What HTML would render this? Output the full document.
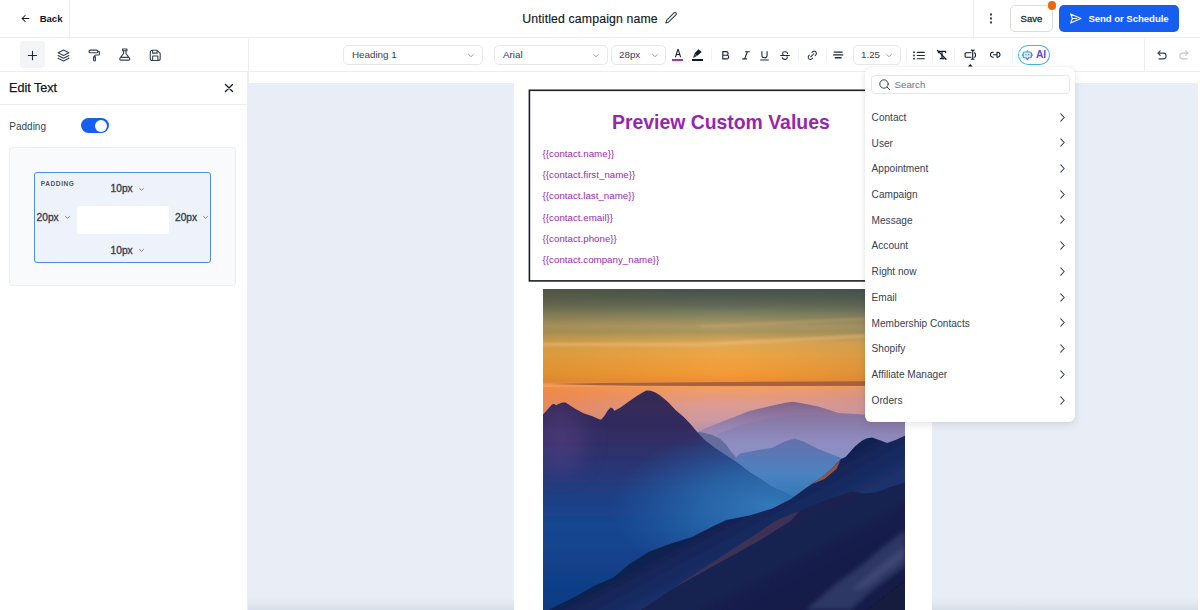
<!DOCTYPE html>
<html lang="en">
<head>
<meta charset="utf-8">
<title>Email Builder</title>
<style>
*{box-sizing:border-box;margin:0;padding:0}
html,body{width:1200px;height:610px;overflow:hidden;background:#fff;font-family:"Liberation Sans",sans-serif;color:#1f2937}
.abs{position:absolute}
#app{position:relative;width:1200px;height:610px;overflow:hidden;background:#fff}
/* top bar */
#topbar{left:0;top:0;width:1200px;height:38px;border-bottom:1px solid #eef0f3;background:#fff}
.vdiv{position:absolute;width:1px;background:#eceef2}
.t{position:absolute;white-space:nowrap;line-height:1}
/* toolbar */
#toolbar{left:0;top:38px;width:1200px;height:34px;border-bottom:1px solid #eceef2;background:#fff}
.sel{position:absolute;top:45px;height:20px;border:1px solid #e6e8ec;border-radius:5px;background:#fff}
.sel .t{top:4px;font-size:9.800px;color:#374151}
.ico{position:absolute;overflow:visible}
/* left panel */
#left{left:0;top:72px;width:248px;height:538px;background:#fff;border-right:1px solid #eceef2}
/* canvas */
#canvas{left:248px;top:83px;width:950px;height:527px;background:#e9eef6}
#email{left:514px;top:83px;width:418px;height:527px;background:#fff}
#tblock{left:528.800px;top:89.500px;width:388.400px;height:191.500px;border:1.600px solid #15171c;background:#fff}
.cv{position:absolute;left:542.600px;font-size:9.750px;color:#9c2ab0;white-space:nowrap;line-height:1}
/* dropdown */
#dd{left:864.800px;top:67.200px;width:210.600px;height:354.500px;background:#fff;border-radius:6px;box-shadow:0 3px 9px rgba(16,24,40,.10),0 0 1px rgba(16,24,40,.18)}
.it{position:absolute;left:871.600px;font-size:10.100px;color:#374151;white-space:nowrap;line-height:1}
.px{font-size:10.200px;font-weight:normal;color:#374151;-webkit-text-stroke:.35px #374151}
</style>
</head>
<body>
<div id="app">

<!-- CANVAS -->
<div id="canvas" class="abs"></div>
<div class="abs" style="left:248px;top:596px;width:950px;height:14px;background:linear-gradient(to bottom,rgba(40,50,70,0),rgba(40,50,70,.025) 45%,rgba(40,50,70,.085))"></div>
<div id="email" class="abs"></div>
<svg class="ico" style="left:520px;top:85px" width="405" height="200" viewBox="520 85 405 200"><rect x="529.400" y="90.300" width="387.200" height="190.600" fill="#fff" stroke="#1b1e27" stroke-width="1.600"/></svg>
<div class="t" id="ttl" style="left:612px;top:112.900px;font-size:19.4px;font-weight:bold;color:#9826ad">Preview Custom Values</div>
<div class="cv" style="top:148.8px">{{contact.name}}</div>
<div class="cv" style="top:170px">{{contact.first_name}}</div>
<div class="cv" style="top:191.2px">{{contact.last_name}}</div>
<div class="cv" style="top:212.5px">{{contact.email}}</div>
<div class="cv" style="top:233.7px">{{contact.phone}}</div>
<div class="cv" style="top:254.9px">{{contact.company_name}}</div>

<!-- PHOTO -->
<svg id="photo" class="abs" style="left:542.500px;top:289px" width="362.500" height="321" viewBox="542.500 289 362.500 321" preserveAspectRatio="none">
<defs>
<linearGradient id="sky" gradientUnits="userSpaceOnUse" x1="0" y1="289" x2="0" y2="460">
<stop offset="0.000" stop-color="#47524d"/>
<stop offset="0.053" stop-color="#525c52"/>
<stop offset="0.099" stop-color="#626a58"/>
<stop offset="0.146" stop-color="#7f8060"/>
<stop offset="0.193" stop-color="#a09060"/>
<stop offset="0.216" stop-color="#ae9866"/>
<stop offset="0.251" stop-color="#aa965c"/>
<stop offset="0.287" stop-color="#c8a058"/>
<stop offset="0.316" stop-color="#e0a853"/>
<stop offset="0.386" stop-color="#eea545"/>
<stop offset="0.497" stop-color="#f39a35"/>
<stop offset="0.538" stop-color="#f08f38"/>
<stop offset="0.579" stop-color="#f2a064"/>
<stop offset="0.614" stop-color="#ea9a72"/>
<stop offset="0.649" stop-color="#e29a84"/>
<stop offset="0.678" stop-color="#dc9c92"/>
<stop offset="0.719" stop-color="#d49a9a"/>
<stop offset="0.766" stop-color="#cc98a2"/>
<stop offset="0.825" stop-color="#b892aa"/>
<stop offset="0.912" stop-color="#a08cb4"/>
<stop offset="1.000" stop-color="#9088b8"/>
</linearGradient>
<linearGradient id="mA" gradientUnits="userSpaceOnUse" x1="0" y1="391" x2="0" y2="610">
<stop offset="0.000" stop-color="#362a54"/>
<stop offset="0.132" stop-color="#332b5c"/>
<stop offset="0.247" stop-color="#2f2f68"/>
<stop offset="0.361" stop-color="#293676"/>
<stop offset="0.475" stop-color="#1f3f84"/>
<stop offset="0.612" stop-color="#174690"/>
<stop offset="0.795" stop-color="#12428c"/>
<stop offset="1.000" stop-color="#0f3a80"/>
</linearGradient>
<radialGradient id="haze" gradientUnits="userSpaceOnUse" cx="770" cy="506" r="160" gradientTransform="translate(770 506) scale(1 .5) translate(-770 -506)">
<stop offset="0" stop-color="#3379b9" stop-opacity="1"/>
<stop offset=".45" stop-color="#2a6db0" stop-opacity=".75"/>
<stop offset="1" stop-color="#2263a8" stop-opacity="0"/>
</radialGradient>
<linearGradient id="far1" gradientUnits="userSpaceOnUse" x1="0" y1="401" x2="0" y2="445">
<stop offset="0.000" stop-color="#80628a"/>
<stop offset="0.318" stop-color="#8f769e"/>
<stop offset="0.659" stop-color="#9988b4"/>
<stop offset="1.000" stop-color="#988cba"/>
</linearGradient>
<linearGradient id="far2" gradientUnits="userSpaceOnUse" x1="0" y1="414" x2="0" y2="460">
<stop offset="0" stop-color="#86749f"/>
<stop offset=".6" stop-color="#8f8cc0"/>
<stop offset="1" stop-color="#8792c8"/>
</linearGradient>
<linearGradient id="hill" gradientUnits="userSpaceOnUse" x1="0" y1="432" x2="0" y2="470">
<stop offset="0" stop-color="#6d6a98"/>
<stop offset="1" stop-color="#5672ae"/>
</linearGradient>
<linearGradient id="far3" gradientUnits="userSpaceOnUse" x1="0" y1="438" x2="0" y2="510">
<stop offset="0.000" stop-color="#666fa9"/>
<stop offset="0.236" stop-color="#5a78b6"/>
<stop offset="0.514" stop-color="#4a82c0"/>
<stop offset="0.792" stop-color="#3579b8"/>
<stop offset="1.000" stop-color="#2b6db0"/>
</linearGradient>
<linearGradient id="mR" gradientUnits="userSpaceOnUse" x1="700" y1="530" x2="742" y2="608">
<stop offset="0.000" stop-color="#10204e"/>
<stop offset="0.250" stop-color="#16295e"/>
<stop offset="0.600" stop-color="#1d336f"/>
<stop offset="1.000" stop-color="#1f3572"/>
</linearGradient>
<linearGradient id="mR2" gradientUnits="userSpaceOnUse" x1="700" y1="568" x2="738" y2="640">
<stop offset="0.000" stop-color="#1a2250"/>
<stop offset="0.300" stop-color="#182150"/>
<stop offset="1.000" stop-color="#141c46"/>
</linearGradient>
<linearGradient id="wc" gradientUnits="userSpaceOnUse" x1="542" y1="0" x2="905" y2="0"><stop offset="0" stop-color="#7a5a10" stop-opacity=".16"/><stop offset=".5" stop-color="#7a5a10" stop-opacity="0"/><stop offset="1" stop-color="#203a55" stop-opacity=".14"/></linearGradient>
<linearGradient id="wc2" gradientUnits="userSpaceOnUse" x1="542" y1="0" x2="905" y2="0"><stop offset="0" stop-color="#f07a28" stop-opacity=".55"/><stop offset=".3" stop-color="#f07a28" stop-opacity=".2"/><stop offset=".5" stop-color="#e8a090" stop-opacity="0"/><stop offset="1" stop-color="#a87a9a" stop-opacity=".4"/></linearGradient>
<filter id="b10" x="-60%" y="-60%" width="220%" height="220%"><feGaussianBlur stdDeviation="11"/></filter>
<filter id="b2" x="-5%" y="-100%" width="110%" height="300%"><feGaussianBlur stdDeviation="1.300"/></filter>
<filter id="b1" x="-5%" y="-5%" width="110%" height="110%"><feGaussianBlur stdDeviation="0.600"/></filter>
<filter id="b3" x="-10%" y="-10%" width="120%" height="120%"><feGaussianBlur stdDeviation="2.500"/></filter>
<clipPath id="cm"><path d="M542 414.5 L543 414 L546 410.8 L551 405 L553 403.7 L556 405.3 L558 404 L562 402.5 L565 402.5 L570 405.8 L575 409 L583 413.3 L592 416.3 L598 419 L600.5 419.7 L604 415.8 L607 410.8 L610 407.5 L612 408.3 L614 410.8 L620 407.5 L628 401.7 L636 396.3 L642 392.5 L646 390.5 L650 390.8 L655 392.5 L660 395.8 L668 402.5 L675 410 L683 416.7 L690 424 L697 432.5 L705 440.8 L715 448.3 L725 455 L733 460 L740 465 L748.9 472 L771.8 487 L790 495.5 L830 520 L905 560 L905 610 L542 610Z"/></clipPath>
<clipPath id="cp"><rect x="542.500" y="289" width="362.500" height="321"/></clipPath>
</defs>
<g clip-path="url(#cp)">
<rect x="542" y="289" width="364" height="322" fill="url(#sky)"/>
<rect x="542" y="289" width="364" height="94.500" fill="url(#wc)"/>
<rect x="542" y="387" width="364" height="60" fill="url(#wc2)"/>
<path d="M542 343 L700 343 L866 334 L866 337.500 L700 346.500 L542 346Z" fill="#f2c48a" opacity=".4" filter="url(#b2)"/>
<path d="M700 325 L866 317.500 L866 320 L700 328Z" fill="#d3b07c" opacity=".3" filter="url(#b2)"/>
<path d="M550 384 L600 383 L640 382.800 L700 382.300 L760 381.800 L866 381.300 L866 386 L760 386 L700 385.900 L640 385.700 L600 385.300Z" fill="#a05c3c" opacity=".9" filter="url(#b1)"/>
<g filter="url(#b1)">
<!-- far ridges -->
<path d="M690 436 L703 429 L726 420 L749 411 L770 406 L785 402.800 L792.500 401.800 L800 403 L817.700 406.400 L838 413 L863.600 414.400 L905 420 L905 480 L690 480Z" fill="url(#far1)"/>
<path d="M700 445 L720 433 L740 425 L765 419 L795 414.400 L830 415.500 L863 415.500 L905 421 L905 500 L700 500Z" fill="url(#far2)"/>
<path d="M688 436 L694 431.700 L700 432 L712 435 L720 439 L726 445 L730 451 L735 456.700 L745 480 L688 480Z" fill="url(#hill)"/>
<path d="M725 470 L735 458 L739.700 453.400 L758 450 L771.800 447.700 L783 442 L793.600 438.500 L803 441.500 L817.700 448.900 L840.700 458 L905 480 L905 530 L725 530Z" fill="url(#far3)"/>
<!-- main left mountain -->
<path d="M542 414.5 L543 414 L546 410.8 L551 405 L553 403.7 L556 405.3 L558 404 L562 402.5 L565 402.5 L570 405.8 L575 409 L583 413.3 L592 416.3 L598 419 L600.5 419.7 L604 415.8 L607 410.8 L610 407.5 L612 408.3 L614 410.8 L620 407.5 L628 401.7 L636 396.3 L642 392.5 L646 390.5 L650 390.8 L655 392.5 L660 395.8 L668 402.5 L675 410 L683 416.7 L690 424 L697 432.5 L705 440.8 L715 448.3 L725 455 L733 460 L740 465 L748.9 472 L771.8 487 L790 495.5 L830 520 L905 560 L905 610 L542 610Z" fill="url(#mA)"/>
</g>
<g clip-path="url(#cm)"><rect x="560" y="400" width="345" height="210" fill="url(#haze)"/><ellipse cx="560" cy="440" rx="26" ry="34" fill="#6a4a90" opacity=".35" filter="url(#b10)"/></g>
<g filter="url(#b1)">
<!-- right dark mountain -->
<path d="M905 435.500 L903.800 436 L895 440 L886.600 443 L880 440.500 L871.600 437.400 L866 438.500 L861.300 440.800 L854.400 446.600 L845 456.900 L840.700 459 L829 470.700 L817.700 479.800 L804 489 L790 499.300 L771.800 508.500 L748.900 515.400 L726 520 L713 526 L691.600 537 L670 543.800 L648 552 L629 564 L613 577.600 L594 585.700 L575 596.600 L556 606 L548 610 L905 610Z" fill="url(#mR)"/>
<path d="M840 460.500 L829 470.700 L817.700 479.800 L812 484 L824 479 L836 469Z" fill="#a86048" opacity=".85"/>
<path d="M905 482 L890 487 L875 492.500 L863.600 493.600 L851 491.300 L840 495 L827 499.300 L799.300 510.800 L776.400 520 L747 539.700 L730 551 L700 570 L670 590 L648 605 L640 610 L905 610Z" fill="url(#mR2)"/>
<path d="M799.300 510.800 L776.400 520 L747 539.700 L700 570 L670 590 L720 562 L760 540 L790 521Z" fill="#54405a" opacity=".6"/>
<path d="M905 530 L885 545 L860 566 L835 584 L805 610 L850 610 L875 588 L905 566Z" fill="#4f588c" opacity=".45" filter="url(#b3)"/>
<path d="M905 546 L880 565 L850 590 L864 588 L905 557Z" fill="#7c86b0" opacity=".2" filter="url(#b3)"/>
<path d="M905 580 L866 610 L905 610Z" fill="#121a3c" filter="url(#b1)"/>
</g>
</g>
</svg>

<!-- TOP BAR -->
<div id="topbar" class="abs"></div>
<div class="vdiv" style="left:69px;top:0;height:38px"></div>
<div class="vdiv" style="left:973px;top:0;height:38px"></div>
<div class="t" id="back" style="left:39.700px;top:13.500px;font-size:9.600px;letter-spacing:-.05px;font-weight:bold;color:#111827">Back</div>
<div class="t" id="cname" style="left:522.300px;top:12.500px;font-size:12.300px;letter-spacing:.13px;color:#111827;-webkit-text-stroke:.15px #111827">Untitled campaign name</div>
<div class="abs" style="left:1009.500px;top:4.500px;width:43.700px;height:27.500px;border:1px solid #d9dde3;border-radius:5px;background:#fff"></div>
<div class="t" id="save" style="left:1020.600px;top:13.700px;font-size:9.500px;color:#1f2937;-webkit-text-stroke:.3px #1f2937">Save</div>
<div class="abs" style="left:1047.600px;top:1.200px;width:8.800px;height:8.800px;border-radius:50%;background:#e8690b;box-shadow:0 0 0 1px rgba(255,255,255,.85)"></div>
<div class="abs" style="left:1059px;top:4.500px;width:120px;height:27.500px;border-radius:5px;background:#155eef"></div>
<div class="t" id="send" style="left:1088.400px;top:13.500px;font-size:9.600px;letter-spacing:-.05px;font-weight:bold;color:#fff">Send or Schedule</div>

<!-- TOOLBAR -->
<div id="toolbar" class="abs"></div>
<div class="vdiv" style="left:248px;top:39px;height:44px"></div>
<div class="abs" style="left:20px;top:41px;width:25px;height:27px;background:#f2f4f7;border-radius:3px"></div>
<div class="sel" style="left:343px;width:140px"><div class="t" id="h1" style="left:8px">Heading 1</div></div>
<div class="sel" style="left:494px;width:114px"><div class="t" style="left:8px">Arial</div></div>
<div class="sel" style="left:611px;width:55px"><div class="t" style="left:7px">28px</div></div>
<div class="sel" style="left:853px;width:48px"><div class="t" style="left:7px">1.25</div></div>

<svg class="ico" style="left:468.00px;top:53.70px" width="6" height="3.2" viewBox="0 0 6 3.2" fill="none" stroke="#9ca3af" stroke-width="1" stroke-linecap="round" stroke-linejoin="round"><path d="M.6 .5L3.0 2.7L5.4 .5"/></svg>
<svg class="ico" style="left:593.00px;top:53.70px" width="6" height="3.2" viewBox="0 0 6 3.2" fill="none" stroke="#9ca3af" stroke-width="1" stroke-linecap="round" stroke-linejoin="round"><path d="M.6 .5L3.0 2.7L5.4 .5"/></svg>
<svg class="ico" style="left:652.00px;top:53.70px" width="6" height="3.2" viewBox="0 0 6 3.2" fill="none" stroke="#9ca3af" stroke-width="1" stroke-linecap="round" stroke-linejoin="round"><path d="M.6 .5L3.0 2.7L5.4 .5"/></svg>
<svg class="ico" style="left:886.00px;top:53.70px" width="6" height="3.2" viewBox="0 0 6 3.2" fill="none" stroke="#9ca3af" stroke-width="1" stroke-linecap="round" stroke-linejoin="round"><path d="M.6 .5L3.0 2.7L5.4 .5"/></svg>
<div class="vdiv" style="left:711.0px;top:48px;height:14px;background:#f0f2f5"></div>
<div class="vdiv" style="left:798.0px;top:48px;height:14px;background:#f0f2f5"></div>
<div class="vdiv" style="left:826.0px;top:48px;height:14px;background:#f0f2f5"></div>
<div class="vdiv" style="left:905.5px;top:48px;height:14px;background:#f0f2f5"></div>
<div class="vdiv" style="left:932.0px;top:48px;height:14px;background:#f0f2f5"></div>
<div class="vdiv" style="left:953.5px;top:48px;height:14px;background:#f0f2f5"></div>
<div class="vdiv" style="left:1012.0px;top:48px;height:14px;background:#f0f2f5"></div>
<div class="vdiv" style="left:1144px;top:39px;height:33px"></div>
<div class="t" style="left:674.700px;top:48.200px;font-size:10.800px;color:#111827;-webkit-text-stroke:.25px #111827;transform:scaleX(.84);transform-origin:0 0">A</div>
<div class="abs" style="left:672px;top:59.300px;width:11.300px;height:2px;background:#a233b4"></div>
<svg class="ico" style="left:690px;top:47px" width="14" height="13" viewBox="690 47 14 13"><path d="M698.400 49.300L701.700 51.900L697.200 55.800L694.500 53.500Z" fill="#111827"/><path d="M694.500 53.500L697.200 55.800L694.800 57.200L693.100 58L693.500 56.300Z" fill="#374151"/></svg>
<div class="abs" style="left:691.500px;top:59.400px;width:11.600px;height:1.900px;background:#111827"></div>
<svg class="ico" style="left:722px;top:50.700px" width="8" height="8.600" viewBox="0 0 8 8.600" fill="none" stroke="#1f2937" stroke-width="1.150" stroke-linejoin="round"><path d="M.8 .7H4.300A1.800 1.800 0 014.300 4.300H.8Z M.8 4.300H4.900A1.800 1.800 0 014.900 7.900H.8Z"/></svg>
<svg class="ico" style="left:741.500px;top:50.700px" width="8" height="8.600" viewBox="0 0 8 8.600" fill="none" stroke="#1f2937" stroke-width="1.100" stroke-linecap="round"><path d="M3.500 .7H7.300 M.7 7.900H4.500 M5.400 .7L2.600 7.900"/></svg>
<svg class="ico" style="left:760.300px;top:50.500px" width="9" height="9.500" viewBox="0 0 9 9.500" fill="none" stroke="#1f2937" stroke-width="1.050" stroke-linecap="round"><path d="M1.900 .6V4.200A2.600 2.600 0 007.100 4.200V.6 M.6 8.900H8.400"/></svg>
<svg class="ico" style="left:779.500px;top:50.500px" width="10" height="9.200" viewBox="0 0 10 9.200" fill="none" stroke="#1f2937" stroke-width="1.050" stroke-linecap="round"><path d="M7.600 2.600A2.300 2 0 005.300 .8H4.600A2 1.900 0 004.600 4.600 M2.300 6.500A2.400 2 0 004.700 8.400H5.400A2.200 1.900 0 007.100 5.800 M.6 4.600H9.400"/></svg>
<svg class="ico" style="left:807.300px;top:49.800px" width="10.600" height="10.600" viewBox="0 0 24 24" fill="none" stroke="#1f2937" stroke-width="2.300" stroke-linecap="round" stroke-linejoin="round"><path d="M12.700 18.400l-1.400 1.400a5 5 0 01-7.100-7.100l1.400-1.400 M11.300 5.600l1.400-1.400a5 5 0 017.100 7.100l-1.400 1.400 M8.500 15.500l7-7"/></svg>
<svg class="ico" style="left:833px;top:50.800px" width="10.400" height="8" viewBox="0 0 10.400 8" fill="none" stroke="#1f2937" stroke-width="1.450" stroke-linecap="round"><path d="M1.300 1.100H9.100 M.7 3.900H9.700 M2.300 6.700H8.100"/></svg>
<svg class="ico" style="left:913px;top:50.600px" width="12" height="9" viewBox="0 0 12 9" fill="#1f2937" stroke="#1f2937" stroke-width="1.150" stroke-linecap="round"><path d="M4.300 1.300H11.300 M4.300 4.500H11.300 M4.300 7.700H11.300"/><rect x=".2" y=".5" width="1.600" height="1.600" stroke="none"/><rect x=".2" y="3.700" width="1.600" height="1.600" stroke="none"/><rect x=".2" y="6.900" width="1.600" height="1.600" stroke="none"/></svg>
<svg class="ico" style="left:936px;top:49px" width="12" height="12" viewBox="936 49 12 12" fill="none" stroke="#111827" stroke-width="1.200" stroke-linecap="round" stroke-linejoin="round"><path d="M938.400 52.600V51.400H945.600V52.600 M942 51.400V58.600 M940.300 58.700H943.900"/><path d="M937.500 50.400L946 59.200" stroke-width="1.300"/></svg>
<svg class="ico" style="left:963px;top:48px" width="15" height="14" viewBox="963 48 15 14" fill="none" stroke="#111827" stroke-width="1.100" stroke-linecap="round" stroke-linejoin="round"><path d="M971 52.700H966.200A1.100 1.100 0 00965.100 53.800V56.200A1.100 1.100 0 00966.200 57.300H971 M974.300 52.700A1.200 1.200 0 01975.400 53.900V56.100A1.200 1.200 0 01974.300 57.300 M972.700 50.600V58.800 M971.300 50.100C972.100 50.100 972.700 50.300 972.700 51C972.700 50.300 973.300 50.100 974.100 50.100 M971.300 59.300C972.100 59.300 972.700 59.100 972.700 58.400C972.700 59.100 973.300 59.300 974.100 59.300"/></svg>
<svg class="ico" style="left:967.700px;top:63.800px" width="4.600" height="2.600" viewBox="0 0 4.600 2.600" fill="#111827"><path d="M2.300 0L4.600 2.600H0Z"/></svg>
<svg class="ico" style="left:988px;top:49px" width="14" height="12" viewBox="988 49 14 12" fill="none" stroke="#111827" stroke-width="1.050" stroke-linecap="round" stroke-linejoin="round"><path d="M993.300 52.200H992.900A2.500 2.500 0 00992.900 57.200H993.300 M993.600 54.700H996.600 M997 52.200H997.500A2.500 2.500 0 01997.500 57.200H997Z"/></svg>
<div class="abs" style="left:1018px;top:44.700px;width:31.600px;height:20.600px;border-radius:10.300px;background:linear-gradient(100deg,#3cc4e2,#45b0f0 60%,#4b9df8);"></div>
<div class="abs" style="left:1019px;top:45.700px;width:29.600px;height:18.600px;border-radius:9.300px;background:#fff"></div>
<svg class="ico" style="left:1022.300px;top:49.800px" width="10.600" height="10.400" viewBox="0 0 10.600 10.400" fill="none" stroke-linecap="round" stroke-linejoin="round"><defs><linearGradient id="aig" x1="0" y1="0" x2="1" y2="1"><stop offset="0" stop-color="#22c1dc"/><stop offset="1" stop-color="#7c4ff0"/></linearGradient></defs><path d="M5.300 .6V2 M2.500 2H8.100A1.300 1.300 0 019.400 3.300V6.400A1.300 1.300 0 018.100 7.700H6.800L5.300 9.700L3.800 7.700H2.500A1.300 1.300 0 011.200 6.400V3.300A1.300 1.300 0 012.500 2Z M.5 4.200V5.600 M10.100 4.200V5.600" stroke="url(#aig)" stroke-width="1.100" fill="#d9f1fb"/><circle cx="3.900" cy="4.700" r=".75" fill="#3b9df5"/><circle cx="6.700" cy="4.700" r=".75" fill="#6b5cf0"/></svg>
<div class="t" style="left:1036px;top:49.900px;font-size:10.200px;font-weight:bold;letter-spacing:-.2px;color:#6b3fe0">AI</div>
<svg class="ico" style="left:1156.500px;top:49.500px" width="10" height="10.500" viewBox="0 0 10 10.500" fill="none" stroke="#374151" stroke-width="1.100" stroke-linecap="round" stroke-linejoin="round"><path d="M3.200 .8L.9 3.100L3.200 5.400 M.9 3.100H6.200A2.900 2.900 0 016.200 8.900H2"/></svg>
<svg class="ico" style="left:1179px;top:49.500px" width="10" height="10.500" viewBox="0 0 10 10.500" fill="none" stroke="#c3c8d0" stroke-width="1.100" stroke-linecap="round" stroke-linejoin="round"><path d="M6.800 .8L9.100 3.100L6.800 5.400 M9.100 3.100H3.800A2.900 2.900 0 003.800 8.900H8"/></svg>
<!-- LEFT PANEL -->
<div id="left" class="abs"></div>
<div class="t" id="edt" style="left:9px;top:82.100px;font-size:12.600px;color:#111827;-webkit-text-stroke:.25px #111827">Edit Text</div>
<div class="abs" style="left:0;top:104px;width:248px;height:1px;background:#eceef2"></div>
<div class="t" id="pad" style="left:9.300px;top:121.600px;font-size:10px;color:#374151">Padding</div>
<div class="abs" style="left:81px;top:118px;width:28px;height:15px;border-radius:8px;background:#155eef"></div>
<div class="abs" style="left:95px;top:119.5px;width:12px;height:12px;border-radius:50%;background:#fff"></div>
<div class="abs" style="left:9px;top:147px;width:227px;height:139px;border:1px solid #eceef1;border-radius:3px;background:#f9fafb"></div>
<div class="abs" style="left:34px;top:172px;width:177px;height:91px;border:1px solid #4a8fe0;border-radius:3px;background:#eef3fb"></div>
<div class="abs" style="left:77px;top:206px;width:92px;height:28px;border-radius:3px;background:#fff"></div>
<div class="t" id="plab" style="left:40.800px;top:180.800px;font-size:6.5px;font-weight:bold;letter-spacing:.6px;color:#4b5563">PADDING</div>
<div class="t px" style="left:110.600px;top:184.200px">10px</div>
<div class="t px" style="left:36.600px;top:213.200px">20px</div>
<div class="t px" style="left:175px;top:213.200px">20px</div>
<div class="t px" style="left:110.600px;top:246.200px">10px</div>


<!-- ICONS -->
<svg class="ico" style="left:21px;top:13.5px" width="9" height="9" viewBox="0 0 24 24" fill="none" stroke="#111827" stroke-width="2.8" stroke-linecap="round" stroke-linejoin="round"><path d="M21 12H3m0 0l8 8m-8-8l8-8"/></svg>
<svg class="ico" style="left:663.800px;top:11.300px" width="14" height="13.600" viewBox="0 0 24 24" fill="none" stroke="#374151" stroke-width="2" stroke-linecap="round" stroke-linejoin="round"><path d="M3 21l1.2-4.6L17.3 3.3a2.4 2.4 0 013.4 3.4L7.6 19.8 3 21z"/></svg>
<svg class="ico" style="left:989px;top:13px" width="4" height="11" viewBox="0 0 4 11" fill="#374151"><circle cx="2" cy="1.5" r="1.15"/><circle cx="2" cy="5.5" r="1.15"/><circle cx="2" cy="9.5" r="1.15"/></svg>
<svg class="ico" style="left:1068.5px;top:12px" width="13" height="13" viewBox="0 0 24 24" fill="none" stroke="#fff" stroke-width="2" stroke-linecap="round" stroke-linejoin="round"><path d="M3 3.5l19 8.5-19 8.500 3.200-8.500z M6.200 12h8"/></svg>

<svg class="ico" style="left:28px;top:50.500px" width="9" height="9" viewBox="0 0 24 24" fill="none" stroke="#1f2937" stroke-width="3" stroke-linecap="round"><path d="M12 1v22M1 12h22"/></svg>
<svg class="ico" style="left:57px;top:48.500px" width="13" height="13" viewBox="0 0 24 24" fill="none" stroke="#374151" stroke-width="2.150" stroke-linecap="round" stroke-linejoin="round"><path d="M2 7l10-5 10 5-10 5-10-5z M2 12l10 5 10-5 M2 17l10 5 10-5"/></svg>
<svg class="ico" style="left:88px;top:48.500px" width="13" height="13" viewBox="0 0 24 24" fill="none" stroke="#374151" stroke-width="2.150" stroke-linecap="round" stroke-linejoin="round"><path d="M18 4.500h1.500a1.500 1.500 0 011.500 1.500v3a2 2 0 01-2 2h-5a2 2 0 00-2 2v1.500 M4 2h12a2 2 0 012 2v1a2 2 0 01-2 2H4a2 2 0 01-2-2V4a2 2 0 012-2z M10.300 14.500h3.400v6a1.700 1.700 0 01-3.400 0z"/></svg>
<svg class="ico" style="left:118px;top:48.200px" width="13.500" height="13.200" viewBox="0 0 24 24" fill="none" stroke="#374151" stroke-width="2.100" stroke-linecap="round" stroke-linejoin="round"><path d="M8 1.800h8v3.200h-8z M9.800 5v5L3.200 18.800a2.200 2.200 0 001.900 3.400h13.800a2.200 2.200 0 001.900-3.400L14.200 10V5 M5 17.200h14"/></svg>
<svg class="ico" style="left:149px;top:49px" width="12.500" height="12.500" viewBox="0 0 24 24" fill="none" stroke="#374151" stroke-width="2.150" stroke-linecap="round" stroke-linejoin="round"><path d="M6.500 2.500h9l6 6v9.500a4 4 0 01-4 4h-11a4 4 0 01-4-4v-11.500a4 4 0 014-4z M7 2.500v5.500h8.500V3.500 M7 21.500v-8h10v8"/></svg>
<svg class="ico" style="left:223.500px;top:83px" width="10" height="10" viewBox="0 0 10 10" fill="none" stroke="#111827" stroke-width="1.300" stroke-linecap="round"><path d="M1.500 1.500l7 7M8.500 1.500l-7 7"/></svg>

<svg class="ico" style="left:138.50px;top:187.60px" width="5" height="2.8" viewBox="0 0 5 2.8" fill="none" stroke="#6b7280" stroke-width="0.9" stroke-linecap="round" stroke-linejoin="round"><path d="M.6 .5L2.5 2.3L4.4 .5"/></svg>
<svg class="ico" style="left:64.50px;top:216.40px" width="5" height="2.8" viewBox="0 0 5 2.8" fill="none" stroke="#6b7280" stroke-width="0.9" stroke-linecap="round" stroke-linejoin="round"><path d="M.6 .5L2.5 2.3L4.4 .5"/></svg>
<svg class="ico" style="left:202.80px;top:216.40px" width="5" height="2.8" viewBox="0 0 5 2.8" fill="none" stroke="#6b7280" stroke-width="0.9" stroke-linecap="round" stroke-linejoin="round"><path d="M.6 .5L2.5 2.3L4.4 .5"/></svg>
<svg class="ico" style="left:138.50px;top:249.40px" width="5" height="2.8" viewBox="0 0 5 2.8" fill="none" stroke="#6b7280" stroke-width="0.9" stroke-linecap="round" stroke-linejoin="round"><path d="M.6 .5L2.5 2.3L4.4 .5"/></svg>
<!-- DROPDOWN -->
<div id="dd" class="abs"></div>
<div class="abs" style="left:870.700px;top:75.300px;width:199px;height:19px;border:1px solid #e2e5ea;border-radius:4px;background:#fff"></div>
<div class="t" id="srch" style="left:894.600px;top:80.200px;font-size:9.700px;color:#6b7280">Search</div>
<div class="it"None style="top:112.8px">Contact</div>
<div class="it"None style="top:138.5px">User</div>
<div class="it"None style="top:164.2px">Appointment</div>
<div class="it"None style="top:190.0px">Campaign</div>
<div class="it"None style="top:215.7px">Message</div>
<div class="it"None style="top:241.4px">Account</div>
<div class="it"None style="top:267.2px">Right now</div>
<div class="it"None style="top:292.9px">Email</div>
<div class="it" id="mem" style="top:318.6px">Membership Contacts</div>
<div class="it"None style="top:344.4px">Shopify</div>
<div class="it"None style="top:370.1px">Affiliate Manager</div>
<div class="it"None style="top:395.8px">Orders</div>

<svg class="ico" style="left:878.500px;top:79.300px" width="11.500" height="11.500" viewBox="0 0 11.500 11.500" fill="none" stroke="#374151" stroke-width="1" stroke-linecap="round"><circle cx="5" cy="5" r="4.200"/><path d="M8.100 8.100L10.700 10.700"/></svg>
<svg class="ico" style="left:1059.50px;top:112.50px" width="5" height="9" viewBox="0 0 5 9" fill="none" stroke="#374151" stroke-width="1.1" stroke-linecap="round" stroke-linejoin="round"><path d="M.8 .8L4.200 4.500L.8 8.200"/></svg>
<svg class="ico" style="left:1059.50px;top:138.20px" width="5" height="9" viewBox="0 0 5 9" fill="none" stroke="#374151" stroke-width="1.1" stroke-linecap="round" stroke-linejoin="round"><path d="M.8 .8L4.200 4.500L.8 8.200"/></svg>
<svg class="ico" style="left:1059.50px;top:163.90px" width="5" height="9" viewBox="0 0 5 9" fill="none" stroke="#374151" stroke-width="1.1" stroke-linecap="round" stroke-linejoin="round"><path d="M.8 .8L4.200 4.500L.8 8.200"/></svg>
<svg class="ico" style="left:1059.50px;top:189.70px" width="5" height="9" viewBox="0 0 5 9" fill="none" stroke="#374151" stroke-width="1.1" stroke-linecap="round" stroke-linejoin="round"><path d="M.8 .8L4.200 4.500L.8 8.200"/></svg>
<svg class="ico" style="left:1059.50px;top:215.40px" width="5" height="9" viewBox="0 0 5 9" fill="none" stroke="#374151" stroke-width="1.1" stroke-linecap="round" stroke-linejoin="round"><path d="M.8 .8L4.200 4.500L.8 8.200"/></svg>
<svg class="ico" style="left:1059.50px;top:241.10px" width="5" height="9" viewBox="0 0 5 9" fill="none" stroke="#374151" stroke-width="1.1" stroke-linecap="round" stroke-linejoin="round"><path d="M.8 .8L4.200 4.500L.8 8.200"/></svg>
<svg class="ico" style="left:1059.50px;top:266.90px" width="5" height="9" viewBox="0 0 5 9" fill="none" stroke="#374151" stroke-width="1.1" stroke-linecap="round" stroke-linejoin="round"><path d="M.8 .8L4.200 4.500L.8 8.200"/></svg>
<svg class="ico" style="left:1059.50px;top:292.60px" width="5" height="9" viewBox="0 0 5 9" fill="none" stroke="#374151" stroke-width="1.1" stroke-linecap="round" stroke-linejoin="round"><path d="M.8 .8L4.200 4.500L.8 8.200"/></svg>
<svg class="ico" style="left:1059.50px;top:318.30px" width="5" height="9" viewBox="0 0 5 9" fill="none" stroke="#374151" stroke-width="1.1" stroke-linecap="round" stroke-linejoin="round"><path d="M.8 .8L4.200 4.500L.8 8.200"/></svg>
<svg class="ico" style="left:1059.50px;top:344.10px" width="5" height="9" viewBox="0 0 5 9" fill="none" stroke="#374151" stroke-width="1.1" stroke-linecap="round" stroke-linejoin="round"><path d="M.8 .8L4.200 4.500L.8 8.200"/></svg>
<svg class="ico" style="left:1059.50px;top:369.80px" width="5" height="9" viewBox="0 0 5 9" fill="none" stroke="#374151" stroke-width="1.1" stroke-linecap="round" stroke-linejoin="round"><path d="M.8 .8L4.200 4.500L.8 8.200"/></svg>
<svg class="ico" style="left:1059.50px;top:395.50px" width="5" height="9" viewBox="0 0 5 9" fill="none" stroke="#374151" stroke-width="1.1" stroke-linecap="round" stroke-linejoin="round"><path d="M.8 .8L4.200 4.500L.8 8.200"/></svg>
</div>
</body>
</html>
